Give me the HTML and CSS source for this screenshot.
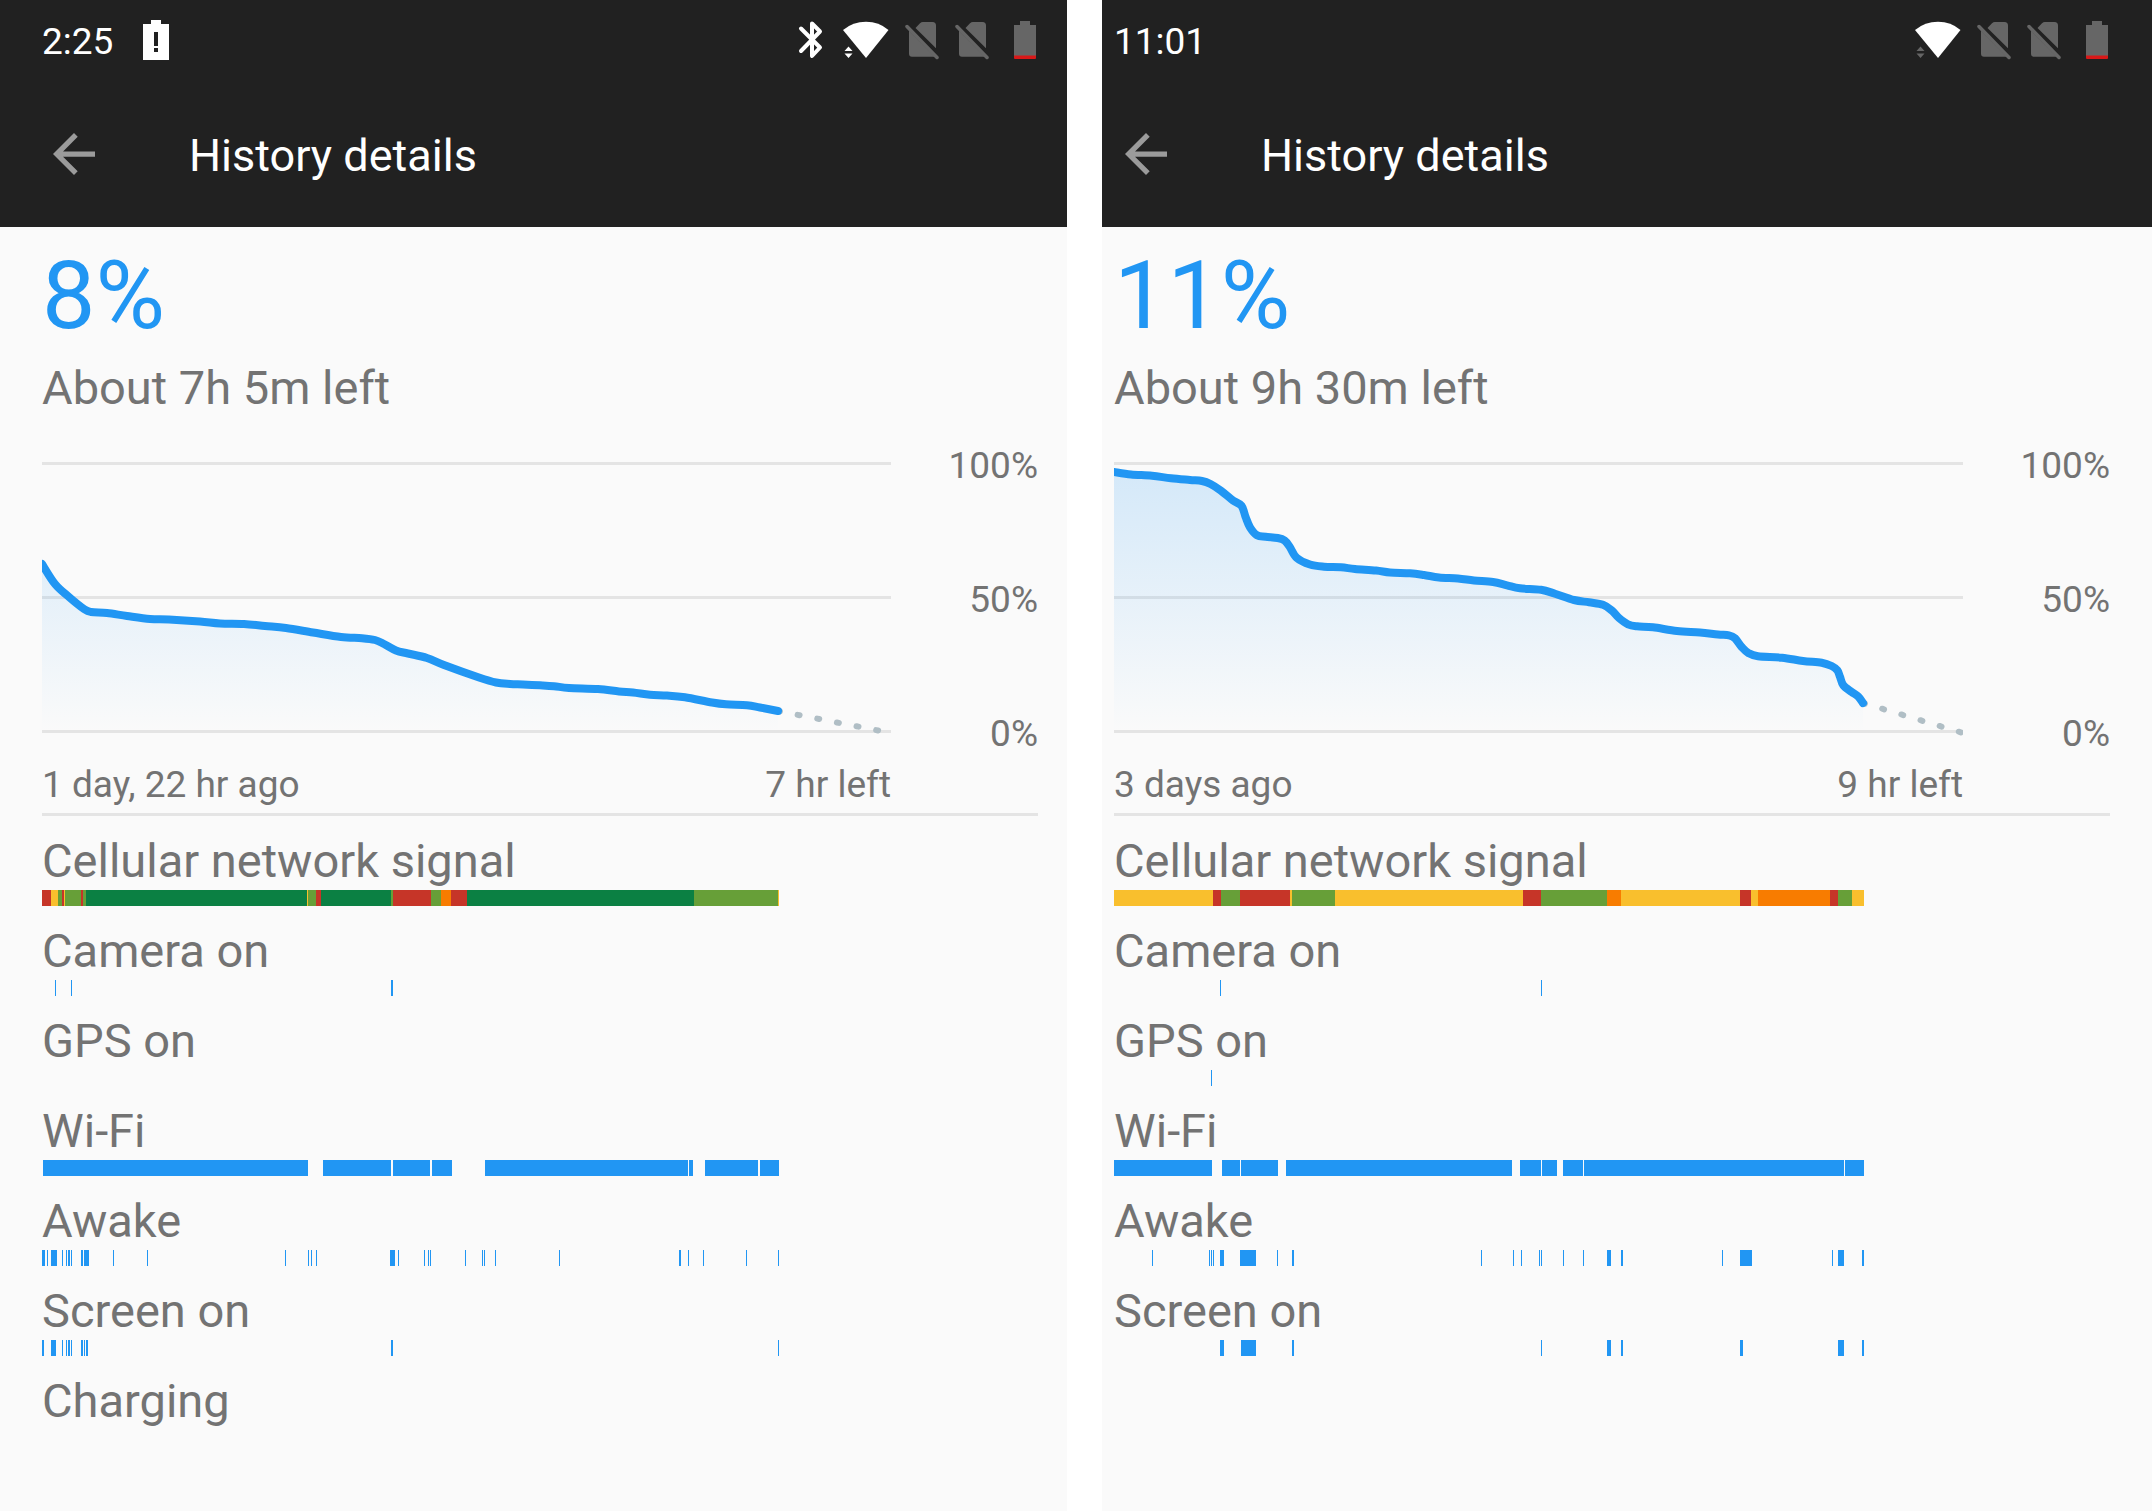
FILE: index.html
```html
<!DOCTYPE html>
<html lang="en">
<head>
<meta charset="utf-8">
<title>History details</title>
<link rel="stylesheet" href="styles.css">
</head>
<body>
<svg class="defs" aria-hidden="true">
  <defs>
    <linearGradient id="level-fill" gradientUnits="userSpaceOnUse" x1="0" y1="0" x2="0" y2="270">
      <stop offset="0" stop-color="#2196f3" stop-opacity="0.18"/>
      <stop offset="1" stop-color="#2196f3" stop-opacity="0"/>
    </linearGradient>
    <symbol id="icon-sim-off" viewBox="0 0 50 40">
      <path fill="#666" d="M4 10.500L29.500 36.700H7a3 3 0 0 1-3-3zM10.500 8L15 3.200Q16.200 2 18 2H27.500Q31 2 31 5.500V28.300z"/>
      <path fill="none" stroke="#666" stroke-width="3.500" stroke-linecap="round" d="M2 6.500L32 37.500"/>
    </symbol>
    <symbol id="icon-battery" viewBox="-9 0 33 40">
      <path fill="#666" d="M6 1h10v4h6v31H0V5h6z"/>
      <path fill="#d81818" d="M0 35.500h22V38q0 1-1 1H1q-1 0-1-1z"/>
    </symbol>
    <symbol id="icon-back" viewBox="4 4 16 16">
      <path fill="#9b9b9b" d="M20 11H7.830l5.590-5.590L12 4l-8 8 8 8 1.410-1.410L7.830 13H20z"/>
    </symbol>
  </defs>
</svg>

<main class="screens">
  <section class="screen screen-first">
    <header class="top">
      <div class="status">
        <time class="clock">2:25</time>
        <svg class="icon-alert" viewBox="0 0 26 40" role="img" aria-label="Battery alert">
          <path fill="#fff" d="M8 0h10v4h8v36H0V4h8z"/>
          <path fill="#212121" d="M11 12h4v14h-4zM11 28h4v4h-4z"/>
        </svg>
        <div class="indicators">
          <svg class="icon-bluetooth" viewBox="0 0 44 40" role="img" aria-label="Bluetooth">
            <path fill="none" stroke="#fff" stroke-width="4" stroke-linecap="round" stroke-linejoin="round" d="M3 8.500L22 27.500L14 36V3.500L22 11.500L3 31"/>
          </svg>
          <svg class="icon-wifi" viewBox="0 0 63 40" role="img" aria-label="Wi-Fi">
            <path fill="#fff" d="M24 38L1 10Q11 1.800 24 1.800T46.500 10z"/>
            <path fill="#fff" d="M2.500 31L6.500 26.500L10.500 31zM2.500 33.500H10.500L6.500 38z"/>
          </svg>
          <svg class="icon-sim" role="img" aria-label="No SIM 1"><use href="#icon-sim-off"/></svg>
          <svg class="icon-sim" role="img" aria-label="No SIM 2"><use href="#icon-sim-off"/></svg>
          <svg class="icon-battery" role="img" aria-label="Battery low"><use href="#icon-battery"/></svg>
        </div>
      </div>
      <div class="appbar">
        <button class="back" type="button" aria-label="Back"><svg class="icon-back"><use href="#icon-back"/></svg></button>
        <h1 class="title">History details</h1>
      </div>
    </header>
    <div class="content">
      <p class="percent">8%</p>
      <p class="estimate">About 7h 5m left</p>
      <div class="chart">
        <svg class="plot" viewBox="0 0 849 274" preserveAspectRatio="none" data-level="first" role="img" aria-label="Battery level"></svg>
        <div class="axis"><span>100%</span><span>50%</span><span>0%</span></div>
        <div class="range"><span>1 day, 22 hr ago</span><span>7 hr left</span></div>
      </div>
      <ul class="events">
        <li class="event"><span>Cellular network signal</span><svg class="track" viewBox="0 0 849 16" preserveAspectRatio="none" data-track="first.signal"></svg></li>
        <li class="event"><span>Camera on</span><svg class="track" viewBox="0 0 849 16" preserveAspectRatio="none" data-track="first.camera"></svg></li>
        <li class="event"><span>GPS on</span><svg class="track" viewBox="0 0 849 16" preserveAspectRatio="none" data-track="first.gps"></svg></li>
        <li class="event"><span>Wi-Fi</span><svg class="track" viewBox="0 0 849 16" preserveAspectRatio="none" data-track="first.wifi"></svg></li>
        <li class="event"><span>Awake</span><svg class="track" viewBox="0 0 849 16" preserveAspectRatio="none" data-track="first.awake"></svg></li>
        <li class="event"><span>Screen on</span><svg class="track" viewBox="0 0 849 16" preserveAspectRatio="none" data-track="first.screen"></svg></li>
        <li class="event"><span>Charging</span><svg class="track" viewBox="0 0 849 16" preserveAspectRatio="none" data-track="first.charging"></svg></li>
      </ul>
    </div>
  </section>

  <section class="screen screen-second">
    <header class="top">
      <div class="status">
        <time class="clock">11:01</time>
        <div class="indicators">
          <svg class="icon-wifi" viewBox="0 0 63 40" role="img" aria-label="Wi-Fi">
            <path fill="#fff" d="M24 38L1 10Q11 1.800 24 1.800T46.500 10z"/>
            <path fill="#666" d="M2.500 31L6.500 26.500L10.500 31zM2.500 33.500H10.500L6.500 38z"/>
          </svg>
          <svg class="icon-sim" role="img" aria-label="No SIM 1"><use href="#icon-sim-off"/></svg>
          <svg class="icon-sim" role="img" aria-label="No SIM 2"><use href="#icon-sim-off"/></svg>
          <svg class="icon-battery" role="img" aria-label="Battery low"><use href="#icon-battery"/></svg>
        </div>
      </div>
      <div class="appbar">
        <button class="back" type="button" aria-label="Back"><svg class="icon-back"><use href="#icon-back"/></svg></button>
        <h1 class="title">History details</h1>
      </div>
    </header>
    <div class="content">
      <p class="percent">11%</p>
      <p class="estimate">About 9h 30m left</p>
      <div class="chart">
        <svg class="plot" viewBox="0 0 849 274" preserveAspectRatio="none" data-level="second" role="img" aria-label="Battery level"></svg>
        <div class="axis"><span>100%</span><span>50%</span><span>0%</span></div>
        <div class="range"><span>3 days ago</span><span>9 hr left</span></div>
      </div>
      <ul class="events">
        <li class="event"><span>Cellular network signal</span><svg class="track" viewBox="0 0 849 16" preserveAspectRatio="none" data-track="second.signal"></svg></li>
        <li class="event"><span>Camera on</span><svg class="track" viewBox="0 0 849 16" preserveAspectRatio="none" data-track="second.camera"></svg></li>
        <li class="event"><span>GPS on</span><svg class="track" viewBox="0 0 849 16" preserveAspectRatio="none" data-track="second.gps"></svg></li>
        <li class="event"><span>Wi-Fi</span><svg class="track" viewBox="0 0 849 16" preserveAspectRatio="none" data-track="second.wifi"></svg></li>
        <li class="event"><span>Awake</span><svg class="track" viewBox="0 0 849 16" preserveAspectRatio="none" data-track="second.awake"></svg></li>
        <li class="event"><span>Screen on</span><svg class="track" viewBox="0 0 849 16" preserveAspectRatio="none" data-track="second.screen"></svg></li>
      </ul>
    </div>
  </section>
</main>
<script src="charts.js"></script>
</body>
</html>
```

FILE: styles.css
```css
* {
  box-sizing: border-box;
}

body {
  margin: 0;
  background: #fff;
  color: #737373;
  font-family: Roboto, sans-serif;
  font-size: 37px;
  line-height: 46px;
}

p,
h1,
ul {
  margin: 0;
  padding: 0;
  font-weight: 400;
}

svg {
  display: block;
}

.defs {
  position: absolute;
  width: 0;
  height: 0;
}

.screens {
  display: grid;
  grid-template-columns: minmax(0, 1067fr) minmax(0, 1050fr);
  column-gap: 35px;
  min-height: 100vh;
}

.screen {
  --pad-left: 42px;
  --pad-right: 29px;
  background: #fafafa;
}

.screen-second {
  --pad-left: 12px;
  --pad-right: 42px;
}

/* Status bar and app bar */

.top {
  padding: 0 var(--pad-right) 0 var(--pad-left);
  background: #212121;
  color: #fff;
}

.status {
  display: flex;
  align-items: flex-start;
  height: 80px;
  padding-top: 20px;
}

.clock {
  line-height: 44px;
}

.icon-alert {
  width: 26px;
  height: 40px;
  margin-left: 30px;
}

.indicators {
  display: flex;
  margin-left: auto;
}

.indicators svg {
  height: 40px;
}

.icon-bluetooth {
  width: 44px;
}

.icon-wifi {
  width: 63px;
}

.icon-sim {
  width: 50px;
}

.icon-battery {
  width: 33px;
}

.appbar {
  display: flex;
  align-items: center;
  gap: 94px;
  height: 147px;
  padding-left: 11px;
}

.back {
  padding: 0;
  border: 0;
  background: none;
}

.icon-back {
  width: 42px;
  height: 42px;
}

.title {
  padding-top: 4px;
  font-size: 45px;
  line-height: 56px;
}

/* Battery summary */

.content {
  padding: 13px var(--pad-right) 60px var(--pad-left);
}

.percent {
  color: #2196f3;
  font-size: 95px;
  line-height: 112px;
}

.estimate {
  margin-top: 8px;
  font-size: 47px;
  line-height: 56px;
}

/* Level chart */

.chart {
  display: grid;
  grid-template-columns: minmax(0, 1fr) 147px;
  row-gap: 5px;
  margin-top: 27px;
  padding-bottom: 5px;
  border-bottom: 3px solid #e4e4e4;
}

.plot {
  width: 100%;
  height: 274px;
  margin-top: 19px;
}

.plot path {
  vector-effect: non-scaling-stroke;
}

.grid-line {
  fill: #e4e4e4;
}

.level-area {
  fill: url(#level-fill);
}

.level-line {
  fill: none;
  stroke: #2196f3;
  stroke-width: 8px;
  stroke-linecap: round;
  stroke-linejoin: round;
}

.level-projection {
  fill: none;
  stroke: #b0bec5;
  stroke-width: 6px;
  stroke-linecap: round;
  stroke-dasharray: 2 18;
}

.axis {
  display: flex;
  flex-direction: column;
  justify-content: space-between;
  height: 314px;
  text-align: right;
}

.range {
  display: flex;
  justify-content: space-between;
}

/* Event timelines */

.events {
  display: grid;
  gap: 17px;
  padding: 17px 147px 0 0;
  list-style: none;
}

.event {
  display: grid;
  gap: 1px;
  font-size: 47px;
  line-height: 56px;
}

.track {
  width: 100%;
  height: 16px;
  shape-rendering: crispEdges;
}
```

FILE: charts.js
```js
const SVG = 'http://www.w3.org/2000/svg';

const BLUE = '#2196f3';
const RED = '#c63528';
const ORANGE = '#f87c00';
const YELLOW = '#f9bf2d';
const LIME = '#679f38';
const GREEN = '#0b8043';

// Battery level: x along the time axis, y down from the 100% line.
const levels = {
  first: {
    points: [[0,102],[13,122],[27,135],[42,147],[49,150],[65,151],[85,154],[108,157],[127,157.5],[158,159.5],[178,161.5],[202,162],[223,164],[244,166],[271,170.5],[299,175],[320,176.2],[333,178],[342,182],[354,188.5],[366,191.5],[385,196],[402,203],[437,215.5],[454,220.5],[468,222],[481,222.5],[498,223.3],[512,224.2],[527,226],[556,227],[577,229.5],[591,230.5],[608,232.8],[625,233.5],[643,235.3],[670,240.5],[684,242.3],[705,243.2],[718,245.5],[736,249]],
    empty: [849,271]
  },
  second: {
    points: [[0,10],[17,12.5],[38,13.7],[57,16.3],[76,18],[88,19],[96.5,22],[107,28.7],[119,38.5],[127.5,43.7],[131.6,55],[136,65.3],[143,73.2],[151.6,74.7],[163.7,76],[170.6,78.5],[175.7,84.7],[182.6,95.7],[196,102.5],[210,104.7],[227,105.3],[241,107],[262,108.5],[276,110.5],[296,111.3],[310,113],[325,115.5],[344,116.5],[360,118.5],[379,120],[393,123.3],[406,126.3],[427,127.8],[441,131.7],[460,138],[475,140.3],[489,142.7],[498,148.7],[505,156],[514,162.3],[523,164.3],[539,165.3],[563,169],[586,170.5],[604,172.5],[615,173.3],[621,176.3],[627.7,185],[634.3,191],[644,194.3],[668,195.7],[689,199],[707.7,200.7],[717.7,204],[723.3,208.3],[726,214.7],[729.3,223.3],[737.7,230],[744.3,234.7],[749,241]],
    empty: [849,271]
  }
};

// Each event is a [start, end] pair; signal segments carry a colour as well.
const tracks = {
  'first.signal': [[0,9,RED],[9,16,YELLOW],[16,20,LIME],[20,22,RED],[22,23,YELLOW],[23,39,LIME],[39,41,RED],[41,44,LIME],[44,265,GREEN],[265,266,YELLOW],[266,274,LIME],[274,279,RED],[279,349,GREEN],[349,351,LIME],[351,389,RED],[389,399,LIME],[399,409,ORANGE],[409,425,RED],[425,652,GREEN],[652,736,LIME],[736,737,YELLOW]],
  'first.camera': [[13,14],[29,30],[349,351]],
  'first.gps': [],
  'first.wifi': [[1,266],[281,349],[351,388],[390,410],[443,646],[647,651],[663,716],[718,737]],
  'first.awake': [[0,3],[5,6],[9,15],[20,21],[24,25],[26,28],[29,30],[39,41],[42,47],[71,72],[105,106],[243,244],[266,267],[269,270],[274,275],[348,353],[356,357],[382,383],[386,387],[388,389],[423,424],[440,441],[442,443],[453,454],[517,518],[637,639],[646,647],[661,662],[704,705],[736,737]],
  'first.screen': [[0,2],[9,14],[20,21],[24,25],[26,28],[29,30],[39,41],[42,43],[44,46],[349,351],[736,737]],
  'first.charging': [],
  'second.signal': [[0,99,YELLOW],[99,107,RED],[107,126,LIME],[126,176,RED],[176,178,YELLOW],[178,221,LIME],[221,409,YELLOW],[409,427,RED],[427,493,LIME],[493,507,ORANGE],[507,626,YELLOW],[626,637,RED],[637,644,YELLOW],[644,716,ORANGE],[716,724,RED],[724,738,LIME],[738,750,YELLOW]],
  'second.camera': [[106,107],[427,428]],
  'second.gps': [[97,98]],
  'second.wifi': [[0,98],[108,126],[127,164],[172,398],[406,427],[428,443],[449,469],[470,730],[731,750]],
  'second.awake': [[38,39],[95,96],[97,98],[99,100],[106,110],[126,142],[163,164],[178,180],[367,368],[399,400],[407,408],[425,426],[427,428],[449,450],[469,470],[493,497],[507,509],[608,609],[626,638],[718,719],[724,730],[748,750]],
  'second.screen': [[106,110],[127,142],[178,180],[427,428],[493,497],[507,509],[626,629],[724,730],[748,750]]
};

function add(parent, name, attributes) {
  const node = document.createElementNS(SVG, name);
  for (const key in attributes) node.setAttribute(key, attributes[key]);
  parent.appendChild(node);
}

// Catmull-Rom spline through the samples, as cubic segments.
function smooth(points) {
  let d = 'M' + points[0].join(' ');
  for (let i = 0; i < points.length - 1; i++) {
    const a = points[Math.max(i - 1, 0)];
    const b = points[i];
    const c = points[i + 1];
    const e = points[Math.min(i + 2, points.length - 1)];
    d += 'C' + [
      b[0] + (c[0] - a[0]) / 6, b[1] + (c[1] - a[1]) / 6,
      c[0] - (e[0] - b[0]) / 6, c[1] - (e[1] - b[1]) / 6,
      c[0], c[1]
    ].join(' ');
  }
  return d;
}

for (const plot of document.querySelectorAll('[data-level]')) {
  const { points, empty } = levels[plot.dataset.level];
  const line = smooth(points);
  const last = points[points.length - 1];
  for (const y of [0, 134, 268]) {
    add(plot, 'rect', { class: 'grid-line', x: 0, y, width: 849, height: 3 });
  }
  add(plot, 'path', { class: 'level-area', d: `${line}V270H0z` });
  add(plot, 'path', { class: 'level-projection', d: `M${last.join(' ')}L${empty.join(' ')}` });
  add(plot, 'path', { class: 'level-line', d: line });
}

for (const track of document.querySelectorAll('[data-track]')) {
  for (const [start, end, fill = BLUE] of tracks[track.dataset.track]) {
    add(track, 'rect', { x: start, y: 0, width: end - start, height: 16, fill });
  }
}
```
